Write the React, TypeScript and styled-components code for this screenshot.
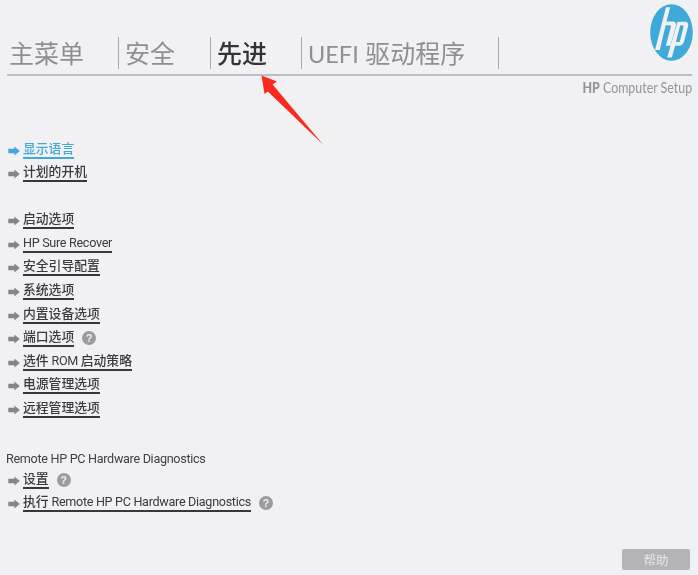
import React from "react";
import styled, { createGlobalStyle } from "styled-components";

const Global = createGlobalStyle`
  html, body { margin: 0; padding: 0; background: #f1f1f3; }
  body { font-family: "Roboto", "Noto Sans CJK SC", sans-serif; }
`;

const Page = styled.div`
  position: relative;
  width: 698px;
  height: 575px;
  overflow: hidden;
  background: #f1f1f3;
  filter: blur(0.45px);
`;

const Header = styled.header`
  display: flex;
  align-items: flex-end;
  justify-content: space-between;
  height: 74px;
  margin: 0 6px 0 7px;
  border-bottom: 2px solid #bdbdc3;
`;

const Tabs = styled.nav`
  display: flex;
  align-items: flex-start;
  height: 32px;
  margin-bottom: 5px;
`;

const Tab = styled.div<{ $w: number; $pad: number; $active?: boolean }>`
  width: ${(p) => p.$w}px;
  height: 32px;
  box-sizing: border-box;
  padding-left: ${(p) => p.$pad}px;
  border-right: 1px solid #a9a9ad;
  font: ${(p) => (p.$active ? 500 : 400)} 25px/32px "Lato", "Noto Sans CJK SC", sans-serif;
  color: ${(p) => (p.$active ? "#333335" : "#8f8f91")};
  white-space: nowrap;
`;

const TabLatin = styled.span`
  font-size: 23.5px;
`;

const Logo = styled.svg`
  width: 43px;
  height: 57px;
  margin: 0 -1px 13px 0;
`;

const Subtitle = styled.div`
  height: 24px;
  padding-right: 6px;
  text-align: right;
`;

const SubtitleText = styled.span`
  display: inline-block;
  font: 400 15.5px/22px "Lato", sans-serif;
  color: #959597;
  transform: scaleX(0.8);
  transform-origin: right center;
  b { font-weight: 900; }
`;

const Main = styled.main`
  padding: 39.6px 0 0 6px;
`;

const Group = styled.ul<{ $gap: number }>`
  list-style: none;
  margin: 0 0 ${(p) => p.$gap}px;
  padding: 0;
`;

const Row = styled.li`
  display: flex;
  align-items: flex-start;
  height: 23.6px;
`;

const Arrow = styled.svg`
  width: 12px;
  height: 10px;
  margin: 6px 3px 0 2px;
  flex: none;
`;

const Label = styled.span<{ $selected?: boolean }>`
  display: inline-block;
  height: 19px;
  box-sizing: border-box;
  font-size: 12.8px;
  font-weight: 500;
  line-height: 17px;
  white-space: nowrap;
  color: ${(p) => (p.$selected ? "#41a8d8" : "#3a3a3c")};
  border-bottom: 2px solid ${(p) => (p.$selected ? "#41a8d8" : "#38383c")};
`;

const Latin = styled.span`
  font-size: 12.6px;
  font-weight: 400;
  letter-spacing: -0.3px;
`;

const Help = styled.span`
  width: 14px;
  height: 14px;
  margin: 3px 0 0 8px;
  border-radius: 50%;
  background: #9c9c9e;
  color: #f1f1f3;
  font: 700 10.5px/14px "Liberation Sans", sans-serif;
  text-align: center;
  flex: none;
`;

const Heading = styled.div`
  height: 19px;
  font-size: 12.6px;
  letter-spacing: -0.3px;
  line-height: 16px;
  color: #3f3f41;
`;

const HelpButton = styled.button`
  position: absolute;
  right: 8px;
  bottom: 5px;
  width: 68px;
  height: 21px;
  padding: 0;
  border: none;
  border-radius: 2px;
  background: #b4b4b6;
  color: #e6e6e8;
  font: 400 12.5px/21px "Noto Sans CJK SC", sans-serif;
`;

const Callout = styled.svg`
  position: absolute;
  left: 255px;
  top: 70px;
  width: 75px;
  height: 80px;
`;

const NavArrow = ({ color }: { color: string }) => (
  <Arrow viewBox="0 0 12 10">
    <path d="M0.3 2.8H6.4V0.6L11.8 5 6.4 9.4V7.2H0.3Z" fill={color} />
  </Arrow>
);

const Item = ({
  children,
  selected,
  help,
}: {
  children: React.ReactNode;
  selected?: boolean;
  help?: boolean;
}) => (
  <Row>
    <NavArrow color={selected ? "#41a8d8" : "#85858a"} />
    <Label $selected={selected}>{children}</Label>
    {help && <Help>?</Help>}
  </Row>
);

export default function App() {
  return (
    <Page>
      <Global />
      <Header>
        <Tabs>
          <Tab $w={112} $pad={2}>主菜单</Tab>
          <Tab $w={92} $pad={6}>安全</Tab>
          <Tab $w={91} $pad={6} $active>先进</Tab>
          <Tab $w={197} $pad={6}>
            <TabLatin>UEFI</TabLatin> 驱动程序
          </Tab>
        </Tabs>
        <Logo viewBox="0 0 43 57">
          <ellipse cx="21.5" cy="28.5" rx="21.3" ry="28.3" fill="#3fa9da" />
          <path
            fill="#f1f1f3"
            d="M16 3.2H20.2L16.5 17.5H22.5C25.5 17.5 26.5 19.5 25.8 22L20.5 41.7H15.8L20.8 23C21.2 21.7 20.6 21.2 19.6 21.2H15.6L9.8 46H5Z"
          />
          <path
            fill="#f1f1f3"
            fillRule="evenodd"
            d="M27.5 17.7H34.5C37.5 17.7 38.8 19.5 38 22.5L34.2 37C33.4 40 31.5 41.7 28.6 41.7H25L21.8 53.6H17.2ZM30.3 21.3L25.9 38H28.3C29.2 38 29.8 37.5 30.1 36.5L33.4 23.5C33.7 22 33.2 21.3 32.2 21.3Z"
          />
        </Logo>
      </Header>
      <Subtitle>
        <SubtitleText>
          <b>HP</b> Computer Setup
        </SubtitleText>
      </Subtitle>
      <Main>
        <Group $gap={23.4}>
          <Item selected>显示语言</Item>
          <Item>计划的开机</Item>
        </Group>
        <Group $gap={28}>
          <Item>启动选项</Item>
          <Item><Latin>HP Sure Recover</Latin></Item>
          <Item>安全引导配置</Item>
          <Item>系统选项</Item>
          <Item>内置设备选项</Item>
          <Item help>端口选项</Item>
          <Item>选件<Latin> ROM </Latin>启动策略</Item>
          <Item>电源管理选项</Item>
          <Item>远程管理选项</Item>
        </Group>
        <Heading>Remote HP PC Hardware Diagnostics</Heading>
        <Group $gap={0}>
          <Item help>设置</Item>
          <Item help>执行<Latin> Remote HP PC Hardware Diagnostics</Latin></Item>
        </Group>
      </Main>
      <HelpButton>帮助</HelpButton>
      <Callout viewBox="0 0 75 80">
        <path d="M6.5 5.5L22 11.5L17.6 14.6L68.5 75L12.8 21.5L9.5 24Z" fill="#fb2a1f" />
      </Callout>
    </Page>
  );
}
